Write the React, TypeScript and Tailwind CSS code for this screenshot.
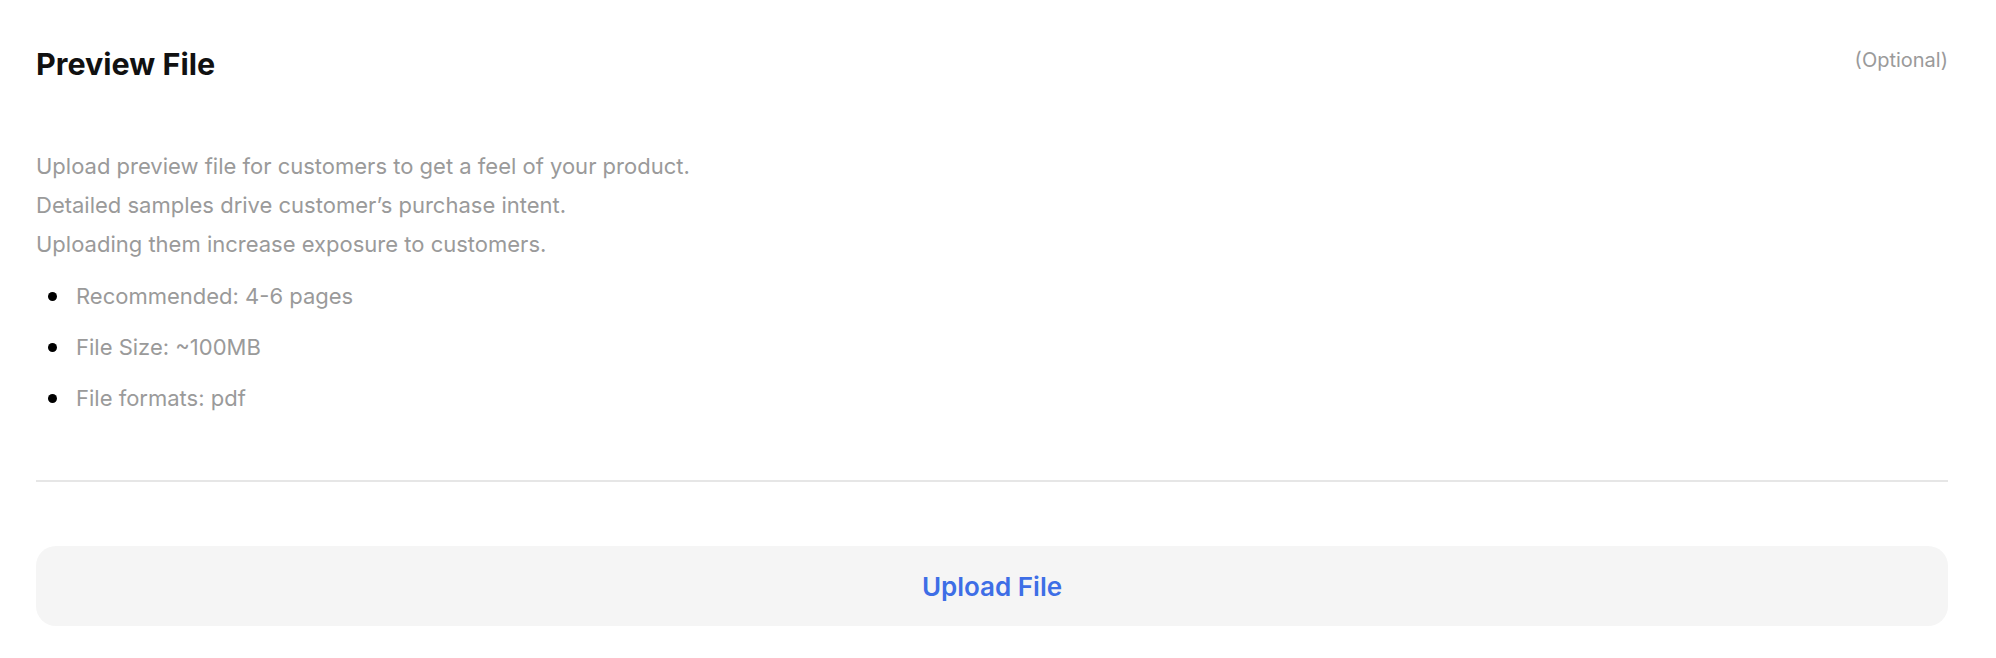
const DESCRIPTION = [
  'Upload preview file for customers to get a feel of your product.',
  'Detailed samples drive customer’s purchase intent.',
  'Uploading them increase exposure to customers.',
];

const REQUIREMENTS = ['Recommended: 4-6 pages', 'File Size: ~100MB', 'File formats: pdf'];

export default function App() {
  return (
    <div className="min-h-screen bg-white pl-9 pr-12 pt-[46px] pb-[34px] font-['Inter',sans-serif]">
      <header className="flex items-start justify-between">
        <h2 className="text-[30.5px] font-bold leading-9 text-[#111111]">Preview File</h2>
        <span className="text-[20px] leading-7 text-[#9a9a9a]">(Optional)</span>
      </header>

      <div className="mt-[65px] text-[22px] leading-[39px] text-[#9a9a9a]">
        {DESCRIPTION.map((line) => (
          <p key={line}>{line}</p>
        ))}
      </div>

      <ul className="mt-[17px] flex flex-col gap-[21px]">
        {REQUIREMENTS.map((item) => (
          <li key={item} className="flex items-center text-[22px] leading-[30px] text-[#9a9a9a]">
            <span className="ml-3 mr-[19px] h-[9px] w-[9px] rounded-full bg-black" />
            {item}
          </li>
        ))}
      </ul>

      <hr className="mt-[67px] h-[2px] border-0 bg-[#e6e6e6]" />

      <button
        type="button"
        className="mt-16 flex h-20 w-full items-center justify-center rounded-[20px] bg-[#f5f5f5] text-[26px] font-semibold text-[#3e6ee6]"
      >
        Upload File
      </button>
    </div>
  );
}
